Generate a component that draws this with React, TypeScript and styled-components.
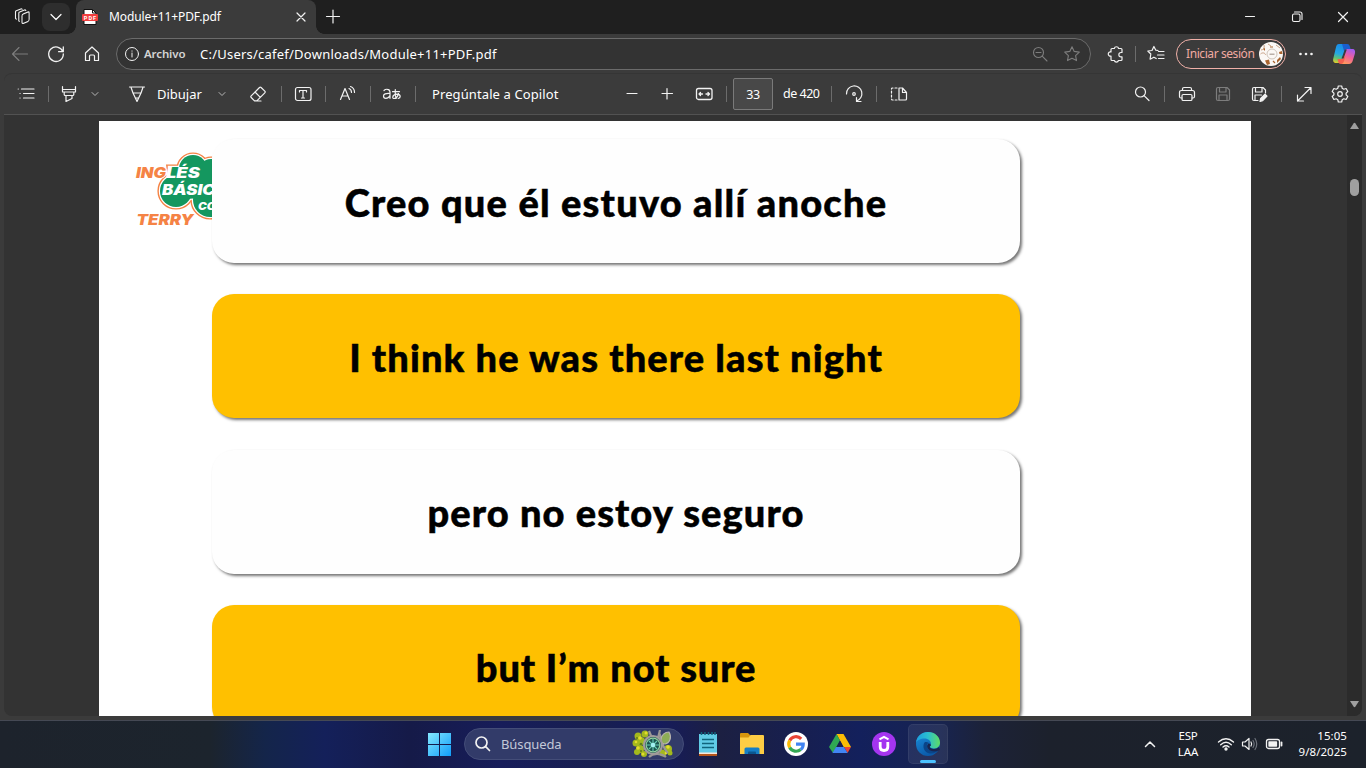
import React from "react";
import styled, { createGlobalStyle } from "styled-components";

const Global = createGlobalStyle`
  * { box-sizing: border-box; }
  body { margin: 0; overflow: hidden; background: #3b3b3b; }
`;

const ui = `"Noto Sans", "Open Sans", sans-serif`;

const Screen = styled.div`
  width: 1366px;
  height: 768px;
  display: flex;
  flex-direction: column;
  background: #3b3b3b;
  color: #fff;
  font-family: ${ui};
  overflow: hidden;
`;

const TabStrip = styled.div`
  height: 34px;
  flex: none;
  display: flex;
  align-items: center;
  background: #1f1f1f;
`;

const AddressRow = styled.div`
  height: 39px;
  flex: none;
  display: flex;
  align-items: center;
  background: #3b3b3b;
`;

const PdfBar = styled.div`
  height: 42px;
  flex: none;
  margin: 0 4px;
  display: flex;
  align-items: center;
  background: #3b3b3b;
  border-top: 1px solid #353535;
  border-bottom: 1px solid #525252;
  border-radius: 8px 8px 0 0;
`;

const Cell = styled.span<{ $ml?: number; $w?: number; $dim?: boolean }>`
  flex: none;
  width: ${(p) => p.$w ?? 20}px;
  height: 20px;
  margin-left: ${(p) => p.$ml ?? 0}px;
  display: flex;
  align-items: center;
  justify-content: center;
  color: ${(p) => (p.$dim ? "#7d7d7d" : "#f2f2f2")};
`;

const Divider = styled.span<{ $ml: number }>`
  flex: none;
  width: 1px;
  height: 16px;
  margin-left: ${(p) => p.$ml}px;
  background: #6c6c6c;
`;

const Label = styled.span<{ $ml: number; $w: number; $size?: number; $ls?: number; $color?: string; $bold?: boolean }>`
  flex: none;
  width: ${(p) => p.$w}px;
  margin-left: ${(p) => p.$ml}px;
  font-size: ${(p) => p.$size ?? 13}px;
  line-height: 18px;
  letter-spacing: ${(p) => p.$ls ?? 0}px;
  font-weight: ${(p) => (p.$bold ? 600 : 400)};
  color: ${(p) => p.$color ?? "#fff"};
  white-space: nowrap;
`;

const TabMenu = styled.span`
  width: 28px;
  height: 28px;
  margin-left: 10px;
  display: flex;
  align-items: center;
  justify-content: center;
  border-radius: 8px;
  background: #2e2e2e;
`;

const Tab = styled.div`
  width: 256px;
  height: 34px;
  margin-left: -2px;
  display: flex;
  align-items: center;
  flex: none;
`;

const TabBody = styled.div`
  width: 240px;
  height: 34px;
  display: flex;
  align-items: center;
  border-radius: 8px 8px 0 0;
  background: #3b3b3b;
`;

const Foot = styled.span<{ $side: "left" | "right" }>`
  width: 8px;
  height: 8px;
  align-self: flex-end;
  background: radial-gradient(circle at ${(p) => (p.$side === "left" ? "0 0" : "100% 0")}, transparent 7.5px, #3b3b3b 8px);
`;

const AddressPill = styled.div`
  width: 975px;
  height: 32px;
  margin-left: 14px;
  flex: none;
  display: flex;
  align-items: center;
  border: 1px solid #6b6b6b;
  border-radius: 16px;
  background: #333;
`;

const Spacer = styled.span`
  flex: 1;
`;

const ProfilePill = styled.div`
  width: 110px;
  height: 30px;
  margin-left: 10px;
  flex: none;
  display: flex;
  align-items: center;
  border: 1px solid #f0b0a8;
  border-radius: 15px;
`;

const PageInput = styled.div`
  width: 40px;
  height: 32px;
  margin-left: 6px;
  flex: none;
  display: flex;
  align-items: center;
  justify-content: center;
  border: 1px solid #7a7a7a;
  border-radius: 2px;
  background: #484848;
  font-size: 12.5px;
  letter-spacing: -0.4px;
`;

const Viewer = styled.div`
  height: 601px;
  flex: none;
  margin: 0 4px;
  padding-left: 95px;
  display: flex;
  background: #333;
  border-radius: 0 0 8px 8px;
  overflow: hidden;
`;

const Page = styled.div`
  width: 1152px;
  height: 595px;
  margin-top: 6px;
  flex: none;
  display: flex;
  background: #fff;
  overflow: hidden;
`;

const LogoColumn = styled.div`
  width: 113px;
  flex: none;
  padding: 19px 0 0 21px;
  overflow: hidden;
`;

const Cards = styled.div`
  width: 808px;
  flex: none;
  padding-top: 18px;
  display: flex;
  flex-direction: column;
  gap: 31.3px;
`;

const Card = styled.div<{ $accent?: boolean }>`
  height: 124px;
  flex: none;
  display: flex;
  align-items: center;
  justify-content: center;
  border-radius: 22px;
  background: ${(p) => (p.$accent ? "#ffc000" : "#fefefe")};
  box-shadow: 2px 2px 3px rgba(0, 0, 0, 0.55);
`;

const Phrase = styled.span<{ $ls: number }>`
  font: 900 38px/48px Lato, sans-serif;
  letter-spacing: ${(p) => p.$ls}px;
  color: #000;
  -webkit-text-stroke: 0.5px #000;
  white-space: nowrap;
  padding-top: 1px;
`;

const ScrollTrack = styled.div`
  width: 15px;
  margin-left: 96px;
  padding: 7px 0 7px;
  display: flex;
  flex-direction: column;
  align-items: center;
  background: #2b2b2b;
`;

const Thumb = styled.span`
  width: 9px;
  height: 17px;
  margin-top: 49px;
  border-radius: 5px;
  background: #9f9f9f;
`;

const Taskbar = styled.div`
  height: 48px;
  margin-top: 4px;
  padding-bottom: 1px;
  flex: none;
  display: flex;
  align-items: center;
  border-top: 1px solid #454954;
  background: linear-gradient(90deg, #1d232c 0, #1c242d 210px, #14254a 265px, #14205a 325px, #151a48 410px, #171d5a 500px, #181f50 600px, #151b5e 655px, #1c2042 720px, #171f50 800px, #13205c 860px, #182450 940px, #1c2238 985px, #1c212c 1050px, #1c222b 100%);
`;

const SearchBox = styled.div`
  width: 220px;
  height: 32px;
  margin-left: 13px;
  flex: none;
  display: flex;
  align-items: center;
  border: 1px solid #444d78;
  border-radius: 16px;
  background: #323b69;
`;

const AppSlot = styled.span<{ $active?: boolean; $ml?: number }>`
  width: 40px;
  height: 40px;
  margin-left: ${(p) => p.$ml ?? 4}px;
  flex: none;
  display: flex;
  flex-direction: column;
  align-items: center;
  justify-content: ${(p) => (p.$active ? "flex-end" : "center")};
  border-radius: 5px;
  background: ${(p) => (p.$active ? "rgba(255,255,255,0.07)" : "transparent")};
  box-shadow: ${(p) => (p.$active ? "inset 0 0 0 1px rgba(255,255,255,0.06)" : "none")};
`;

const ActiveMark = styled.span`
  width: 16px;
  height: 3px;
  margin: 4px 0 1px;
  border-radius: 2px;
  background: #4cc2ff;
`;

const TrayText = styled.div<{ $ml: number; $w: number; $right?: boolean }>`
  width: ${(p) => p.$w}px;
  margin-left: ${(p) => p.$ml}px;
  flex: none;
  text-align: ${(p) => (p.$right ? "right" : "center")};
  font-size: 11.5px;
  line-height: 16px;
  letter-spacing: ${(p) => (p.$right ? 0.05 : -0.15)}px;
  white-space: nowrap;
`;

type GlyphProps = { children: React.ReactNode; s?: number; sw?: number };
const Glyph = ({ children, s = 20, sw = 1.1 }: GlyphProps) => (
  <svg width={s} height={s} viewBox={`0 0 ${s} ${s}`} fill="none" stroke="currentColor" strokeWidth={sw} strokeLinecap="round" strokeLinejoin="round">
    {children}
  </svg>
);

const Chevron = () => (
  <svg width="10" height="10" viewBox="0 0 10 10" fill="none" stroke="#b5b5b5" strokeLinecap="round"><path d="M2 3.5 5 6.5 8 3.5" /></svg>
);

const Logo = () => (
  <svg width="92" height="100" viewBox="0 0 92 100">
    {[["#f58345", 2.6], ["#fff", 1.2], ["#14975f", 0]].map(([color, grow]) => (
      <g key={String(color)} fill={String(color)} stroke={String(color)} strokeWidth={Number(grow) * 2}>
        <circle cx="73" cy="29" r="14" />
        <circle cx="91" cy="32" r="13" />
        <circle cx="56" cy="51" r="16" />
        <circle cx="90" cy="60" r="17" />
        <path d="M49 27h43v30l-38 3z" />
      </g>
    ))}
    <g fontFamily="Inter, sans-serif" fontWeight="900" fontStyle="italic" lengthAdjust="spacingAndGlyphs">
      <text x="16" y="37.500" fontSize="14" fill="#f58345" stroke="#fff" strokeWidth="1.500" paintOrder="stroke" textLength="30" lengthAdjust="spacingAndGlyphs">ING</text>
      <text x="46" y="37.500" fontSize="14" fill="#fff" textLength="34" lengthAdjust="spacingAndGlyphs">LÉS</text>
      <text x="42" y="54.500" fontSize="14.500" fill="#fff" textLength="66" lengthAdjust="spacingAndGlyphs">BÁSICO</text>
      <text x="78" y="70" fontSize="10.500" fill="#fff" textLength="27" lengthAdjust="spacingAndGlyphs">CON</text>
      <text x="16.500" y="84.500" fontSize="14.500" fill="#f58345" textLength="57" lengthAdjust="spacingAndGlyphs">TERRY</text>
    </g>
  </svg>
);

const PdfIcon = () => (
  <svg width="16" height="16" viewBox="0 0 16 16">
    <path d="M2 .5h8.500L14 4v11.500H2z" fill="#fff" stroke="#111" />
    <path d="M10.500.5V4H14" fill="none" stroke="#111" />
    <rect y="5" width="16" height="7" rx="1" fill="#f13d3d" />
    <text x="1.700" y="10.500" fontFamily="Roboto, sans-serif" fontWeight="700" fontSize="5.600" fill="#fff" textLength="12.500">PDF</text>
  </svg>
);

const Avatar = () => (
  <svg width="24" height="24" viewBox="0 0 24 24">
    <circle cx="12" cy="12" r="12" fill="#fbf8f5" />
    <g fill="none" stroke="#c9a287" strokeWidth="1">
      <circle cx="13" cy="12" r="5" stroke="#cfc4ba" /><path d="M2 8c2 0 4-2 3-5M1.500 12c2-2 5-1 5 1M17 3l4 3M9 2l3 2" />
    </g>
    <path d="M10.500 11.500h5v1.500h-5z" fill="#b9aea6" />
    <path d="M6 18.500l4-1 1 4.500-3 1zM18 18l3-3 1 2-4 4zM20 10l3-1 .5 3-3 0zM4 7l2-1 0 3z" fill="#a9642f" />
    <path d="M11 5l3 0M14 19l2 2" stroke="#a9642f" strokeWidth="1.200" />
  </svg>
);

const Copilot = () => (
  <svg width="24" height="24" viewBox="0 0 24 24">
    <defs>
      <linearGradient id="cpa" x1=".2" y1="0" x2="0" y2="1"><stop offset="0" stopColor="#1b8fe8" /><stop offset=".45" stopColor="#24a8e4" /><stop offset=".7" stopColor="#5fc378" /><stop offset="1" stopColor="#f7cf1e" /></linearGradient>
      <linearGradient id="cpb" x1=".7" y1="0" x2=".3" y2="1"><stop offset="0" stopColor="#a45cf0" /><stop offset=".5" stopColor="#f0609a" /><stop offset="1" stopColor="#ff9a5a" /></linearGradient>
    </defs>
    <path d="M7 2h8L10.500 17.500C9.800 19.800 9 21 7 21H4.500C1.500 21 .7 19 1.300 16.500L3.800 6C4.400 3.500 5 2 7 2z" fill="url(#cpa)" />
    <path d="M10 2h5c2 0 2.500 1 3 3l.7 2.500H16c-2.500 0-3 1.500-3.500 3z" fill="#1a5fd0" />
    <path d="M17 22H9l4.500-14.500C14.200 7 15 7 16.500 7H20c3 0 3.500 2 2.800 5l-2 6.500c-.6 2-1.800 3.500-3.800 3.500z" fill="url(#cpb)" />
    <path d="M13.500 14 12 19c-.5 2-1.500 3-3 3-2 0-2.500-1-3-3l-.4-2H8.500c2 0 3-1 5-3z" fill="#f2604f" />
    <path d="M12.800 7.500h2L11.500 16.500H9.500z" fill="#3b3b3b" />
  </svg>
);

const SearchArt = () => (
  <svg width="42" height="28" viewBox="0 0 42 28">
    <g fill="#a3b91c"><circle cx="6" cy="6" r="3.500" /><circle cx="13" cy="4" r="3.500" /><circle cx="4" cy="13" r="3.500" /><circle cx="9" cy="11" r="4" /><circle cx="8" cy="19" r="4" /><circle cx="5" cy="22" r="3" /><circle cx="12" cy="24" r="3" /><circle cx="36" cy="19" r="4" /><circle cx="31" cy="23" r="3.500" /><circle cx="38" cy="23" r="2.500" /></g>
    <g fill="#e3dc2c"><circle cx="8" cy="8" r="1.800" /><circle cx="4" cy="12" r="1.300" /><circle cx="6" cy="18" r="1.800" /><circle cx="14" cy="3" r="1.500" /><circle cx="36" cy="17" r="1.800" /><circle cx="11" cy="24" r="1.500" /><circle cx="34" cy="23" r="1.300" /></g>
    <g fill="#5f7d18"><circle cx="9" cy="14" r="1.300" /><circle cx="5" cy="8" r="1" /><circle cx="9" cy="21" r="1" /><circle cx="33" cy="20" r="1" /></g>
    <path d="M17 1l3 7M28 0l-2 8M17 27c4-4 12-4 17 0M27 3c3 4 2 14 9 20" stroke="#9b9894" strokeWidth="2.200" fill="none" />
    <path d="M29 10c0-5 4-8 8-8 3 5 1 11-4 12-3 0-4-2-4-4z" fill="#8eae56" stroke="#b7b3b0" strokeWidth="1.200" />
    <circle cx="21" cy="15" r="9" fill="#1c534f" stroke="#a19c9b" strokeWidth="2.200" />
    <circle cx="21" cy="15" r="6.800" fill="none" stroke="#91cf9f" strokeWidth="1.200" />
    <path d="M21 9v12M15 15h12M17 11l8 8M25 11l-8 8" stroke="#65cdb4" strokeWidth="1.100" />
    <circle cx="21" cy="15" r="2.200" fill="#a2eff0" />
  </svg>
);

const EdgeLogo = () => (
  <svg width="24" height="24" viewBox="0 0 24 24">
    <defs>
      <linearGradient id="ea" x1="0" y1=".5" x2="1" y2=".5"><stop stopColor="#1c9de0" /><stop offset=".5" stopColor="#2bbfce" /><stop offset="1" stopColor="#5fdc63" /></linearGradient>
      <linearGradient id="eb" x1="0" y1="0" x2=".5" y2="1"><stop stopColor="#1b8fdc" /><stop offset="1" stopColor="#0b59a8" /></linearGradient>
    </defs>
    <circle cx="12" cy="12" r="12" fill="url(#eb)" />
    <path d="M0 10.500C.7 4.500 5.500 0 12 0c7 0 12 5 12 10.500 0 4-3 6-6.200 6-2.600 0-4-1-4-1.700 0-.6 1.200-1.100 1.200-3C15 9 12.300 6.500 8.500 6.500 4.500 6.500 1 8.500 0 10.500z" fill="url(#ea)" />
    <path d="M8.500 10.500C6 14 8 21 14 21.500c3.500.3 6.500-1 8.300-3.200C19 20 12 19.500 11 14.500c-.4-2 .7-3.200 1.800-3.500-1.300-1-3.300-1.200-4.300-.5z" fill="#0a4589" />
    <path d="M13.800 14.800c0 1 1.600 2.200 4 2.200 2.200 0 4-.7 5-2L24 18l-1.500.5C18 20.500 12 19 11.200 15c-.3-1.800.5-3 1.600-3.800 1.200.6 2.200 1.600 2.200 1.800 0 1-1.200 1.200-1.200 1.800z" fill="#182550" />
  </svg>
);

export default function App() {
  return (
    <Screen>
      <Global />
      <TabStrip>
        <Cell $ml={12}>
          <Glyph sw={1.1}><rect x="0" y="0" width="7.500" height="9.500" rx="1.500" transform="matrix(.95 -.38 0 1 10 7.400)" /><path d="M7.300 14.300 6.800 13.800V6.200q0-.8.8-1.100L12.500 3q.9-.3 1.300.5M4.300 12.200 3.500 11.300V4.800q0-.8.8-1.100L8.800 1.900q.9-.3 1.300.4" /></Glyph>
        </Cell>
        <TabMenu><Glyph s={14} sw={1.200}><path d="M2 4.500l5 5 5-5" /></Glyph></TabMenu>
        <Tab>
          <Foot $side="left" />
          <TabBody>
            <Cell $ml={6} $w={16}><PdfIcon /></Cell>
            <Label $ml={11} $w={182} $size={12} $ls={-0.12}>Module+11+PDF.pdf</Label>
            <Cell $w={20}><Glyph s={12} sw={1.2}><path d="M2 2l8 8M10 2l-8 8" /></Glyph></Cell>
          </TabBody>
          <Foot $side="right" />
        </Tab>
        <Cell $ml={-1}><Glyph sw={1.200}><path d="M10 3v13M3.500 9.500h13" /></Glyph></Cell>
        <Spacer />
        <Cell><Glyph><path d="M5.500 9.500h9" /></Glyph></Cell>
        <Cell $ml={27}><Glyph><rect x="5.500" y="7" width="7.500" height="7.500" rx="1.500" /><path d="M7.500 5h5.500q2 0 2 2v5.500" /></Glyph></Cell>
        <Cell $ml={26}><Glyph sw={1.200}><path d="M5.500 5.500l9 9M14.500 5.500l-9 9" /></Glyph></Cell>
        <Cell $w={13} />
      </TabStrip>

      <AddressRow>
        <Cell $ml={10} $dim><Glyph><path d="M17.500 10H2.500M9 3.500 2.500 10 9 16.500" /></Glyph></Cell>
        <Cell $ml={16}><Glyph sw={1.300}><path d="M16.800 7.500A7.300 7.300 0 1 0 17.300 10M17.300 3v4.700h-4.700" /></Glyph></Cell>
        <Cell $ml={16}><Glyph sw={1.200}><path d="M3.500 9 10 3l6.500 6v7.500h-4v-4.500q0-1-1-1h-3q-1 0-1 1v4.500h-4z" /></Glyph></Cell>
        <AddressPill>
          <Cell $ml={7} $w={16}><Glyph s={16} sw={1}><circle cx="8" cy="8" r="6.500" /><path d="M8 7v4M8 4.900v.3" /></Glyph></Cell>
          <Label $ml={4} $w={42} $size={11.5} $ls={-0.12} $color="#d4d4d4" $bold>Archivo</Label>
          <Label $ml={14} $w={310} $size={13} $ls={0.23}>C:/Users/cafef/Downloads/Module+11+PDF.pdf</Label>
          <Spacer />
          <Cell $w={16} $dim><Glyph s={16}><circle cx="6.500" cy="6.500" r="5" /><path d="M10.200 10.200 15 15M4 6.500h5" /></Glyph></Cell>
          <Cell $ml={16} $w={16} $dim><Glyph s={16}><path d="M8 .8l2.200 4.600 5.100.7-3.700 3.500.9 5L8 12.300 3.500 14.600l.9-5L.7 6.100l5.100-.7z" /></Glyph></Cell>
          <Cell $w={10} />
        </AddressPill>
        <Cell $ml={15}><Glyph sw={1.200}><path d="M6 4.500h2.300a2.200 2.200 0 0 1 4.300 0H15q1 0 1 1v3h-1a2 2 0 0 0 0 4.300h1v2.700q0 1-1 1h-2.500a2.200 2.200 0 0 1-4.200 0H6q-1 0-1-1V12a2.100 2.100 0 1 1 0-4V5.500q0-1 1-1z" /></Glyph></Cell>
        <Divider $ml={9} />
        <Cell $ml={10}><Glyph sw={1.200}><path d="M12 6.500 9.800 6.200 7.900 2.500 6 6.500 1.800 7l3 3-.7 5.200 3.800-2 2.300 1.300M12.500 7.500H18M11.500 11H18M12.500 14.500H18" /></Glyph></Cell>
        <ProfilePill>
          <Label $ml={9} $w={73} $size={12} $ls={-0.42} $color="#f0aaa2">Iniciar sesión</Label>
          <Avatar />
        </ProfilePill>
        <Cell $ml={10}><Glyph><g fill="currentColor" stroke="none"><circle cx="4.500" cy="10" r="1.300" /><circle cx="10" cy="10" r="1.300" /><circle cx="15.500" cy="10" r="1.300" /></g></Glyph></Cell>
        <Cell $ml={16} $w={24}><Copilot /></Cell>
      </AddressRow>

      <PdfBar>
        <Cell $ml={12}><Glyph sw={1.200}><path d="M5.500 5H18M7.500 9.500H18M7.500 14H18M2.200 5h.1M4 9.500h.1M4 14h.1" /></Glyph></Cell>
        <Divider $ml={12} />
        <Cell $ml={10}><Glyph sw={1.200}><path d="M3.500 2.500v5.500h13V2.500M3.500 5.500h13M5.200 8v2.500q0 1 1 1h7.600q1 0 1-1V8M7 11.500v6l6-3V11.500" /></Glyph></Cell>
        <Cell $ml={11} $w={10}><Chevron /></Cell>
        <Cell $ml={27}><Glyph sw={1.200}><path d="M2.500 3h15M4 3.200 6 9l4 8.500L14 9l2-5.800M6 9h8M8.300 14h3.400" /></Glyph></Cell>
        <Label $ml={10} $w={46} $size={13} $ls={0}>Dibujar</Label>
        <Cell $ml={14} $w={10}><Chevron /></Cell>
        <Cell $ml={21}><Glyph sw={1.200}><path d="M11.500 3.500q.8-.8 1.600 0l3.700 3.700q.8.8 0 1.600l-8 8H6.500l-3.300-3.300q-.8-.8 0-1.600zM7 8l5.300 5.300M8 17h5" /></Glyph></Cell>
        <Divider $ml={13} />
        <Cell $ml={11}><Glyph sw={1.200}><rect x="2.500" y="3.500" width="15.500" height="13" rx="2" /><path d="M6.500 8V6.500h7V8M10 6.500v7.500M8.500 14h3" /></Glyph></Cell>
        <Divider $ml={12} />
        <Cell $ml={12}><Glyph sw={1.200}><path d="M2.500 15.500 7 4.500l4.500 11M4 12h6M11 4.500q2.500 1 2.500 4M12.500 2.500q4 1.500 4 6" /></Glyph></Cell>
        <Divider $ml={12} />
        <Cell $ml={11}>
          <Glyph sw={1.200}><path d="M2 6.500Q3.500 5 5.500 5.300q2.500.3 2.500 3v6M8 9.500Q1.500 9 1.500 12q0 2.300 2.300 2.300 3 0 4.200-2.800M10.500 7.700h7M13.300 5.500q-.4 6 1 8.800M16.500 9.500q-1 4.500-4.300 5-1.700 0-1.400-1.700.5-2.300 4.200-2.600 3.200 0 3.200 2.300 0 1.500-2 2" /></Glyph>
        </Cell>
        <Divider $ml={13} />
        <Label $ml={16} $w={128} $size={13} $ls={0.1}>Pregúntale a Copilot</Label>
        <Cell $ml={62}><Glyph sw={1.200}><path d="M5 9.500h10" /></Glyph></Cell>
        <Cell $ml={15}><Glyph sw={1.200}><path d="M10 4.500v10.500M5 9.500h10.500" /></Glyph></Cell>
        <Cell $ml={17}><Glyph sw={1.300}><rect x="2.500" y="4.500" width="15.500" height="11" rx="2" /><path d="M5 10h3.500M6.500 8.500 5 10l1.500 1.500M15.500 10H12M14 8.500l1.500 1.500-1.500 1.500" /></Glyph></Cell>
        <Divider $ml={12} />
        <PageInput>33</PageInput>
        <Label $ml={10} $w={37} $size={12.5} $ls={-0.5}>de 420</Label>
        <Divider $ml={11} />
        <Cell $ml={12}><Glyph sw={1.200}><path d="M2.500 10a7.700 7.700 0 1 1 10 7M12.500 13.500V17.500h4.500" /><circle cx="10" cy="10" r="1.300" /></Glyph></Cell>
        <Divider $ml={12} />
        <Cell $ml={12}><Glyph sw={1.200}><path d="M10 4v12h6.500q1 0 1-1V8.500L13.500 4zM13.500 4v4.500h4" /><path d="M8 4H3.500Q2.500 4 2.500 5v10q0 1 1 1H8" strokeDasharray="2 2" /></Glyph></Cell>
        <Cell $ml={223}><Glyph sw={1.200}><circle cx="8.500" cy="8" r="5" /><path d="M12.300 11.800 17 16.500" /></Glyph></Cell>
        <Divider $ml={12} />
        <Cell $ml={12}><Glyph sw={1.200}><path d="M5.500 6.500V5q0-1.500 1.500-1.500h6q1.500 0 1.500 1.500v1.500M5 14H4q-1.500 0-1.500-1.500v-4q0-2 2-2h11q2 0 2 2v4q0 1.500-1.500 1.500h-1" /><rect x="5" y="10.500" width="10" height="6" rx="1.300" /></Glyph></Cell>
        <Cell $ml={16} $dim><Glyph sw={1.200}><path d="M3.500 5q0-1.500 1.500-1.500h9L16.500 6v9q0 1.500-1.500 1.500H5q-1.500 0-1.500-1.500zM6.500 3.500V8H13V3.500M6 16.500V11h8v5.500" /></Glyph></Cell>
        <Cell $ml={16}><Glyph sw={1.200}><path d="M9 16.500H5q-1.500 0-1.500-1.500V5q0-1.500 1.500-1.500h9L16.500 6v3M6.500 3.500V8H13V3.500M6 16V11h6.500" /><path d="M11 17.500l.7-3L16 10.200l2 2-4.300 4.400z" fill="currentColor" /></Glyph></Cell>
        <Divider $ml={12} />
        <Cell $ml={12}><Glyph sw={1.200}><path d="M3.500 17 16.500 4M11 3.500h6v6M3.500 11v6h6" /></Glyph></Cell>
        <Cell $ml={16}><Glyph sw={1.200}><path d="M8.300 2h3.400l.5 2.300 1.600.9 2.300-.7 1.700 3-1.700 1.600v1.800l1.700 1.600-1.700 3-2.300-.7-1.600.9-.5 2.300H8.300l-.5-2.300-1.600-.9-2.300.7-1.700-3 1.700-1.600V9.100L2.200 7.500l1.700-3 2.300.7 1.600-.9z" /><circle cx="10" cy="10" r="2.300" /></Glyph></Cell>
      </PdfBar>

      <Viewer>
        <Page>
          <LogoColumn><Logo /></LogoColumn>
          <Cards>
            <Card><Phrase $ls={1.2}>Creo que él estuvo allí anoche</Phrase></Card>
            <Card $accent><Phrase $ls={1.1}>I think he was there last night</Phrase></Card>
            <Card><Phrase $ls={1.1}>pero no estoy seguro</Phrase></Card>
            <Card $accent><Phrase $ls={0.85}>but I’m not sure</Phrase></Card>
          </Cards>
        </Page>
        <ScrollTrack>
          <svg width="9" height="8" viewBox="0 0 9 8"><path d="M3.500 1.500q1-1.500 2 0L9 7H0z" fill="#9f9f9f" /></svg>
          <Thumb />
          <Spacer />
          <svg width="9" height="8" viewBox="0 0 9 8"><path d="M0 0h9L5.500 5.500q-1 1.500-2 0z" fill="#9f9f9f" /></svg>
        </ScrollTrack>
      </Viewer>

      <Taskbar>
        <Cell $ml={427} $w={24}>
          <svg width="24" height="24" viewBox="0 0 24 24">
            <defs><linearGradient id="win" x1="0" y1="0" x2="1" y2="1"><stop stopColor="#84e8ff" /><stop offset="1" stopColor="#109dfa" /></linearGradient></defs>
            <path d="M1 1h11v11H1zM13 1h11v11H13zM1 13h11v11H1zM13 13h11v11H13z" fill="url(#win)" />
          </svg>
        </Cell>
        <SearchBox>
          <Cell $ml={8}><Glyph sw={1.700}><circle cx="8.500" cy="8.500" r="5.500" /><path d="M12.700 12.700 16.500 16.500" /></Glyph></Cell>
          <Label $ml={8} $w={131} $size={13} $ls={-0.1} $color="#c3c8d8">Búsqueda</Label>
          <SearchArt />
        </SearchBox>
        <AppSlot>
          <svg width="20" height="24" viewBox="0 0 20 24">
            <rect x="1" y="2" width="18" height="20" fill="#60cbe6" /><rect x="1" y="20.500" width="18" height="1.500" fill="#f4e8dc" /><rect x="1" y="22" width="18" height="2" fill="#b5561b" />
            <path d="M3.500 0v3M7 0v3M10.500 0v3M14 0v3M17 0v3M4 7.500h12M4 11.500h12M4 15.500h12" stroke="#10647c" strokeWidth="1.500" />
          </svg>
        </AppSlot>
        <AppSlot>
          <svg width="24" height="24" viewBox="0 0 24 24">
            <path d="M0 2q0-1 1-1h7l2 2v4H0z" fill="#d8960c" /><path d="M0 5.500h8.500l2-2.500H23q1 0 1 1v18H0z" fill="#fecd44" />
            <path d="M4.500 22v-5q0-1.500 1.500-1.500h12q1.500 0 1.500 1.500v5z" fill="#157ec6" /><path d="M8 22v-1.500q0-1 1-1h6q1 0 1 1V22z" fill="#0b568f" />
          </svg>
        </AppSlot>
        <AppSlot>
          <svg width="24" height="24" viewBox="0 0 24 24" fill="none" strokeWidth="3.200">
            <circle cx="12" cy="12" r="12" fill="#fff" />
            <path d="M17.200 6.800A7.200 7.200 0 0 0 5.700 8.500" stroke="#ea4335" /><path d="M5.700 8.500a7.200 7.200 0 0 0 0 7" stroke="#fbbc05" />
            <path d="M5.700 15.500a7.200 7.200 0 0 0 11 2" stroke="#34a853" /><path d="M12 12.200h7.200q0 3.500-2.500 5.300" stroke="#4285f4" />
          </svg>
        </AppSlot>
        <AppSlot>
          <svg width="24" height="24" viewBox="0 0 24 24">
            <path d="M8.500 2h7L23 15h-7.500z" fill="#fbbc04" /><path d="M1 15 8.500 2 12 8.500 5 21z" fill="#2fa853" /><path d="M16 15h7l-3.500 6z" fill="#ea4335" /><path d="M4.500 21l3.500-6h8l3.500 6z" fill="#4285f4" /><path d="M12 8.500 15.500 15h-7z" fill="#191f50" />
          </svg>
        </AppSlot>
        <AppSlot>
          <svg width="24" height="24" viewBox="0 0 24 24" fill="none" stroke="#fff" strokeWidth="2.800">
            <circle cx="12" cy="12" r="12" fill="#a435f0" stroke="none" /><path d="M8.200 10v5q0 3.500 3.800 3.500t3.800-3.500v-5" /><path d="M7.500 7.300 12 4.800l4.500 2.500" strokeWidth="2" />
          </svg>
        </AppSlot>
        <AppSlot $active><EdgeLogo /><ActiveMark /></AppSlot>
        <Spacer />
        <Cell $w={20}><Glyph sw={1.500}><path d="M5.500 12.500 10 8l4.500 4.500" /></Glyph></Cell>
        <TrayText $ml={13} $w={30}>ESP<br />LAA</TrayText>
        <Cell $ml={13}><Glyph sw={1.400}><path d="M2.500 8q7.500-6.500 15 0M4.700 10.700q5.300-4.700 10.600 0M7 13q3-2.500 6 0" /><circle cx="10" cy="15" r="1" fill="currentColor" /></Glyph></Cell>
        <Cell $ml={4}><Glyph sw={1.200}><path d="M2.500 8h2.500L9 4.500v11L5 12H2.500zM11 8q1.300 2 0 4" /><path d="M13 6.500q2.300 3.500 0 7M15 4.500q3.500 5.500 0 11" stroke="#6d727b" /></Glyph></Cell>
        <Cell $ml={4}><Glyph sw={1.300}><rect x="2.500" y="5.500" width="13" height="9" rx="2" /><rect x="5" y="8" width="7.500" height="4" fill="currentColor" /><path d="M17.500 8.500v3" strokeWidth="1.800" /></Glyph></Cell>
        <TrayText $ml={3} $w={60} $right>15:05<br />9/8/2025</TrayText>
        <Cell $w={19} />
      </Taskbar>
    </Screen>
  );
}
